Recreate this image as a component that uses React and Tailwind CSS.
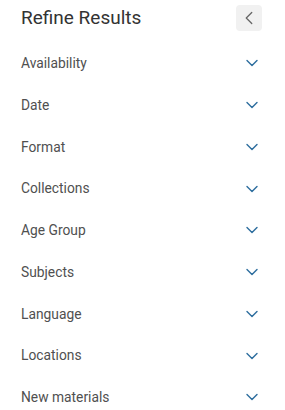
import React from 'react'
import { ChevronDown, ChevronLeft } from 'lucide-react'

const FILTERS = [
  'Availability',
  'Date',
  'Format',
  'Collections',
  'Age Group',
  'Subjects',
  'Language',
  'Locations',
  'New materials',
]

const App = () => {
  return (
    <div className="w-[285px] h-[410px] bg-white overflow-hidden font-['Roboto',sans-serif]">
      <div className="flex items-center justify-between pl-[21px] pr-[23px] pt-[5px]">
        <h2 className="text-[19px] leading-[26px] text-[#333]">Refine Results</h2>
        <button className="flex items-center justify-center w-[26px] h-[26px] rounded bg-[#f1f1f1] text-[#666]">
          <ChevronLeft size={22} strokeWidth={1.4} />
        </button>
      </div>
      <ul className="mt-[11.5px]">
        {FILTERS.map((label) => (
          <li
            key={label}
            className="flex items-center justify-between h-[41.75px] pl-[21px] pr-[23px]"
          >
            <span className="text-[13.8px] text-[#505050]">{label}</span>
            <ChevronDown size={20} strokeWidth={1.7} className="text-[#2f6f9f]" />
          </li>
        ))}
      </ul>
    </div>
  )
}

export default App
